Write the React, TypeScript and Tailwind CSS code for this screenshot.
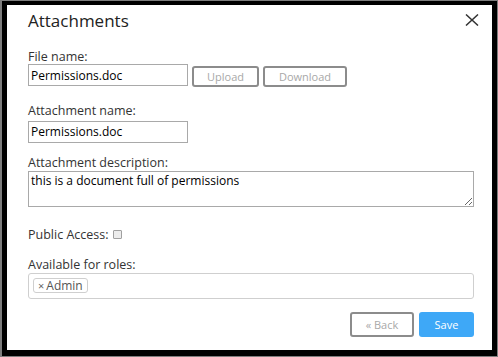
import { useState } from 'react'

const font = { fontFamily: '"Open Sans", "Liberation Sans", sans-serif' }

function Label({ children }: { children: React.ReactNode }) {
  return <label className="block text-[12.5px] leading-[15px] text-[#333]">{children}</label>
}

function GhostButton({ children, className }: { children: React.ReactNode; className: string }) {
  return (
    <button
      className={`rounded-[3px] border-2 border-[#8c8c8c] bg-white text-[11px] leading-none text-[#a8a8a8] ${className}`}
    >
      {children}
    </button>
  )
}

export default function App() {
  const [fileName, setFileName] = useState('Permissions.doc')
  const [attachmentName, setAttachmentName] = useState('Permissions.doc')
  const [description, setDescription] = useState('this is a document full of permissions')
  const [isPublic, setIsPublic] = useState(false)
  const [roles, setRoles] = useState(['Admin'])

  return (
    <div className="h-[357px] w-[498px] bg-[#7d7d7d] pb-[1px] pl-[2px] pr-[1px] pt-[1px]" style={font}>
      <div className="h-full bg-black pb-[6px] pl-[5px] pr-[5px] pt-[4px]">
        <div className="flex h-full flex-col bg-white pl-[21px] pr-[18px] pt-[4px]">
          <div className="-mr-[5px] flex items-start justify-between">
            <h2 className="text-[17px] leading-[23px] font-normal text-[#222]">Attachments</h2>
            <button className="mt-[5px]" aria-label="Close">
              <svg width="14" height="12" viewBox="0 0 14 12">
                <path d="M1 0.5 L13 11.5 M13 0.5 L1 11.5" stroke="#333" strokeWidth="1.5" />
              </svg>
            </button>
          </div>

          <div className="mt-[17px]">
            <Label>File name:</Label>
            <div className="flex items-start">
              <input
                value={fileName}
                onChange={(e) => setFileName(e.target.value)}
                className="h-[22px] w-[160px] border border-[#a9a9a9] px-[2px] text-[12px] text-black outline-none"
              />
              <GhostButton className="ml-[4px] mt-[2px] h-[21px] w-[67px]">Upload</GhostButton>
              <GhostButton className="ml-[4px] mt-[2px] h-[21px] w-[84px]">Download</GhostButton>
            </div>
          </div>

          <div className="mt-[16px]">
            <Label>Attachment name:</Label>
            <input
              value={attachmentName}
              onChange={(e) => setAttachmentName(e.target.value)}
              className="mt-[1px] h-[22px] w-[160px] border border-[#a9a9a9] px-[2px] text-[12px] text-black outline-none"
            />
          </div>

          <div className="mt-[12px]">
            <Label>Attachment description:</Label>
            <textarea
              value={description}
              onChange={(e) => setDescription(e.target.value)}
              className="mt-[1px] block h-[36px] w-full border border-[#a9a9a9] px-[2px] py-[1px] text-[12px] leading-[16px] text-black outline-none"
            />
          </div>

          <div className="mt-[20px] flex items-center text-[12.5px] leading-[15px] text-[#333]">
            <span>Public Access:</span>
            <span
              onClick={() => setIsPublic(!isPublic)}
              className="ml-[5px] mt-[1px] h-[9px] w-[9px] rounded-[1px] border border-[#a0a0a0] bg-[#ececec]"
            />
          </div>

          <div className="mt-[15px]">
            <Label>Available for roles:</Label>
            <div className="mt-[1px] flex h-[26px] w-full items-center gap-1 rounded-[3px] border border-[#cfcfcf] px-[4px]">
              {roles.map((role) => (
                <span
                  key={role}
                  className="flex h-[15px] items-center rounded-[3px] border border-[#cfcfcf] pl-[4px] pr-[4px] text-[12px] leading-none text-[#555]"
                >
                  <button
                    className="mr-[2px] text-[11px] leading-none text-[#666]"
                    onClick={() => setRoles(roles.filter((r) => r !== role))}
                  >
                    ×
                  </button>
                  {role}
                </span>
              ))}
            </div>
          </div>

          <div className="mt-[13px] flex justify-end gap-[5px]">
            <GhostButton className="h-[25px] w-[64px]">« Back</GhostButton>
            <button className="h-[25px] w-[55px] rounded-[3px] bg-[#3ea8f7] text-[11px] leading-none text-white">
              Save
            </button>
          </div>
        </div>
      </div>
    </div>
  )
}
